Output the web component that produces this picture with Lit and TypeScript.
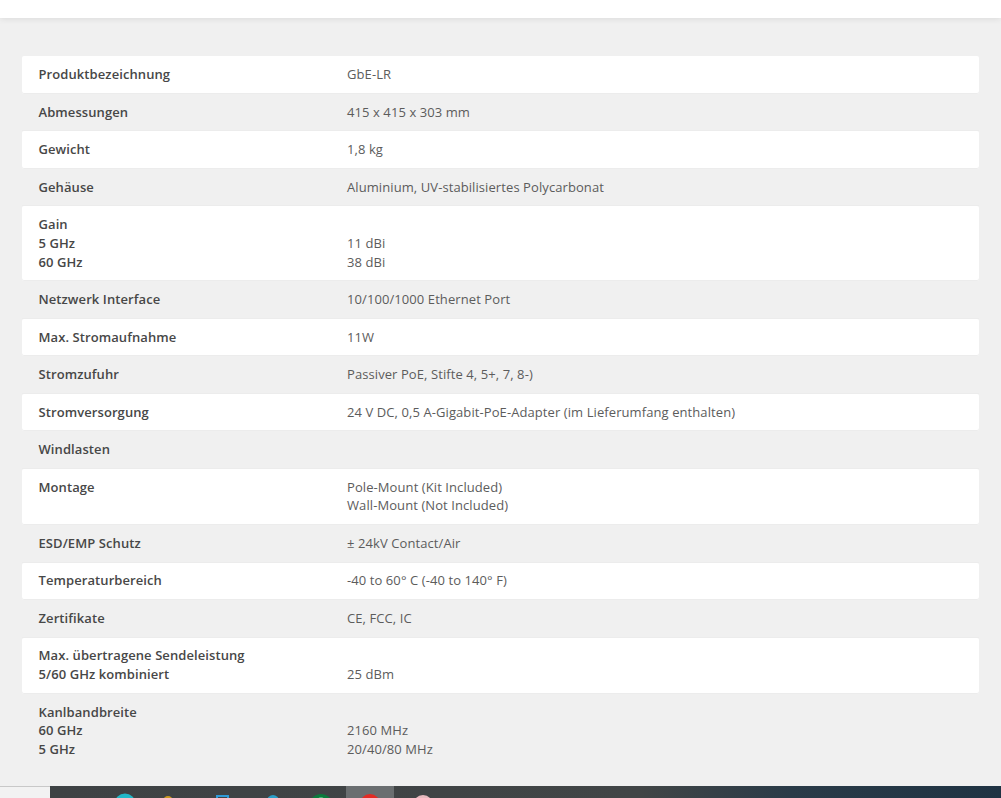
import { LitElement, html, css, svg } from "lit";
import { customElement } from "lit/decorators.js";

const rows: [string[], string[]][] = [
  [["Produktbezeichnung"], ["GbE-LR"]],
  [["Abmessungen"], ["415 x 415 x 303 mm"]],
  [["Gewicht"], ["1,8 kg"]],
  [["Gehäuse"], ["Aluminium, UV-stabilisiertes Polycarbonat"]],
  [["Gain", "5 GHz", "60 GHz"], ["\u00a0", "11 dBi", "38 dBi"]],
  [["Netzwerk Interface"], ["10/100/1000 Ethernet Port"]],
  [["Max. Stromaufnahme"], ["11W"]],
  [["Stromzufuhr"], ["Passiver PoE, Stifte 4, 5+, 7, 8-)"]],
  [["Stromversorgung"], ["24 V DC, 0,5 A-Gigabit-PoE-Adapter (im Lieferumfang enthalten)"]],
  [["Windlasten"], ["\u00a0"]],
  [["Montage"], ["Pole-Mount (Kit Included)", "Wall-Mount (Not Included)"]],
  [["ESD/EMP Schutz"], ["± 24kV Contact/Air"]],
  [["Temperaturbereich"], ["-40 to 60° C (-40 to 140° F)"]],
  [["Zertifikate"], ["CE, FCC, IC"]],
  [["Max. übertragene Sendeleistung", "5/60 GHz kombiniert"], ["\u00a0", "25 dBm"]],
  [["Kanlbandbreite", "60 GHz", "5 GHz"], ["\u00a0", "2160 MHz", "20/40/80 MHz"]],
];

@customElement("app-root")
export class AppRoot extends LitElement {
  static styles = css`
    :host { display: block; height: 798px; overflow: hidden; background: #f0f0f0; font-family: "Open Sans", sans-serif; font-size: 13px; letter-spacing: 0.085px; line-height: 18.75px; color: #5c5c5c; }
    .page { display: flex; flex-direction: column; height: 798px; }
    .top { height: 18px; flex: none; background: #fff; box-shadow: 0 1px 6px rgba(0,0,0,.09); }
    .content { flex: 1; min-height: 0; padding: 38.25px 22px 0; }
    .row { display: grid; grid-template-columns: 318px 1fr; box-shadow: inset 0 -1px 0 #ececec; }
    .row:nth-child(odd) { background: #fff; border-radius: 2px; }
    .row:last-child { box-shadow: none; }
    .cell { padding: 8.875px 0 9.875px 7px; }
    .label { padding-left: 16.5px; font-weight: 600; color: #474747; }
    .line { white-space: nowrap; }
    .task { flex: none; height: 12px; display: flex; background: #fff; }
    .start { width: 50px; flex: none; background: #f2f2f2; border-top: 1px solid #c8c8c8; box-sizing: border-box; }
    .bar { flex: 1; display: block; height: 12px; }
  `;
  render() {
    return html`<div class="page">
      <div class="top"></div>
      <div class="content">
        ${rows.map(([a, b]) => html`<div class="row">
          <div class="cell label">${a.map((l) => html`<div class="line">${l}</div>`)}</div>
          <div class="cell">${b.map((l) => html`<div class="line">${l}</div>`)}</div>
        </div>`)}
      </div>
      <div class="task">
        <div class="start"></div>
        <svg class="bar" viewBox="50 786 951 12" preserveAspectRatio="none">
          <defs><linearGradient id="g" x1="0" x2="1" y1="0" y2="0">
            <stop offset="0" stop-color="#3e4244"/><stop offset=".62" stop-color="#414546"/><stop offset=".78" stop-color="#2a3b48"/><stop offset="1" stop-color="#1f3343"/>
          </linearGradient></defs>
          <rect x="50" y="786" width="951" height="12" fill="url(#g)"/>
          <rect x="346" y="786" width="48" height="12" fill="#6a6e70"/>
          ${svg`
          <circle cx="125" cy="804" r="10.5" fill="#22b8c8"/>
          <circle cx="168" cy="801" r="5" fill="#c9971e"/>
          <rect x="217" y="796" width="11" height="10" fill="none" stroke="#2f9bd8" stroke-width="2"/>
          <circle cx="273" cy="801" r="6" fill="#2a9fc9"/>
          <circle cx="321" cy="806" r="12" fill="#0b7a3c"/>
          <circle cx="321" cy="800" r="3" fill="#4fb57c"/>
          <circle cx="370" cy="804" r="10" fill="#e32b24"/>
          <circle cx="423" cy="805" r="10" fill="#e6b9be"/>
          <circle cx="423" cy="805" r="7" fill="#c9404c"/>
          `}
        </svg>
      </div>
    </div>`;
  }
}
